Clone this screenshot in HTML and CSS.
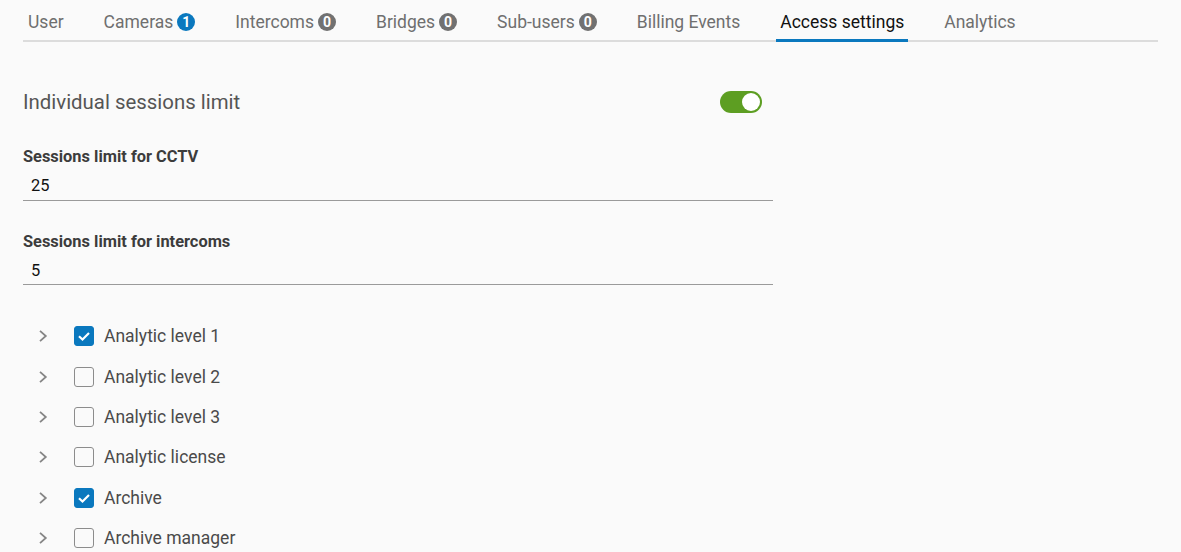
FILE: index.html
```html
<!DOCTYPE html>
<html>
<head>
<meta charset="utf-8">
<link rel="stylesheet" href="styles.css">
</head>
<body>
<div class="page">
  <nav class="tabs">
    <div class="tab">User</div>
    <div class="tab">Cameras <span class="badge badge-blue">1</span></div>
    <div class="tab">Intercoms <span class="badge">0</span></div>
    <div class="tab">Bridges <span class="badge">0</span></div>
    <div class="tab">Sub-users <span class="badge">0</span></div>
    <div class="tab">Billing Events</div>
    <div class="tab active">Access settings</div>
    <div class="tab">Analytics</div>
  </nav>

  <section class="settings">
    <div class="toggle-row">
      <h2 class="heading">Individual sessions limit</h2>
      <div class="switch"><div class="knob"></div></div>
    </div>

    <div class="field field-first">
      <div class="label">Sessions limit for CCTV</div>
      <div class="value">25</div>
    </div>
    <div class="field">
      <div class="label">Sessions limit for intercoms</div>
      <div class="value">5</div>
    </div>

    <ul class="tree">
      <li class="node">
        <svg class="chev" viewBox="0 0 12 14" width="12" height="14"><path d="M3 1.8 L8.8 7 L3 12.2" fill="none" stroke="#858585" stroke-width="1.8"/></svg>
        <span class="cb checked"><svg viewBox="0 0 20 20" width="20" height="20"><path d="M5 10.2 L8.5 13.5 L15 7" fill="none" stroke="#fff" stroke-width="2.2"/></svg></span>
        <span class="name">Analytic level 1</span>
      </li>
      <li class="node">
        <svg class="chev" viewBox="0 0 12 14" width="12" height="14"><path d="M3 1.8 L8.8 7 L3 12.2" fill="none" stroke="#858585" stroke-width="1.8"/></svg>
        <span class="cb"></span>
        <span class="name">Analytic level 2</span>
      </li>
      <li class="node">
        <svg class="chev" viewBox="0 0 12 14" width="12" height="14"><path d="M3 1.8 L8.8 7 L3 12.2" fill="none" stroke="#858585" stroke-width="1.8"/></svg>
        <span class="cb"></span>
        <span class="name">Analytic level 3</span>
      </li>
      <li class="node">
        <svg class="chev" viewBox="0 0 12 14" width="12" height="14"><path d="M3 1.8 L8.8 7 L3 12.2" fill="none" stroke="#858585" stroke-width="1.8"/></svg>
        <span class="cb"></span>
        <span class="name">Analytic license</span>
      </li>
      <li class="node">
        <svg class="chev" viewBox="0 0 12 14" width="12" height="14"><path d="M3 1.8 L8.8 7 L3 12.2" fill="none" stroke="#858585" stroke-width="1.8"/></svg>
        <span class="cb checked"><svg viewBox="0 0 20 20" width="20" height="20"><path d="M5 10.2 L8.5 13.5 L15 7" fill="none" stroke="#fff" stroke-width="2.2"/></svg></span>
        <span class="name">Archive</span>
      </li>
      <li class="node">
        <svg class="chev" viewBox="0 0 12 14" width="12" height="14"><path d="M3 1.8 L8.8 7 L3 12.2" fill="none" stroke="#858585" stroke-width="1.8"/></svg>
        <span class="cb"></span>
        <span class="name">Archive manager</span>
      </li>
    </ul>
  </section>
</div>
</body>
</html>
```

FILE: styles.css
```css
* { box-sizing: border-box; }
html, body {
  margin: 0;
  padding: 0;
  background: #fafafa;
  font-family: Roboto, "Liberation Sans", sans-serif;
  overflow: hidden;
}
.page {
  padding: 0 23px;
  width: 1181px;
  height: 552px;
}
.tabs {
  display: flex;
  gap: 32px;
  height: 42px;
  border-bottom: 2px solid #dcdcdc;
  width: 1135px;
  padding-left: 1px;
}
.tab {
  display: flex;
  align-items: center;
  gap: 4px;
  padding: 4px 4px 0;
  height: 42px;
  font-size: 17.5px;
  color: #6f6f6f;
  white-space: nowrap;
  margin-bottom: -2px;
  border-bottom: 3px solid transparent;
}
.tab.active {
  color: #111;
  border-bottom-color: #0a78be;
}
.badge {
  display: inline-flex;
  align-items: center;
  justify-content: center;
  width: 18px;
  height: 18px;
  border-radius: 50%;
  background: #717171;
  color: #fff;
  font-size: 14px;
  font-weight: 700;
}
.badge-blue { background: #0a78be; }

.settings {
  width: 750px;
}
.toggle-row {
  display: flex;
  align-items: center;
  justify-content: space-between;
  padding-right: 11px;
  margin-top: 48px;
  height: 24px;
}
.heading {
  margin: 0;
  font-size: 20.4px;
  font-weight: 400;
  color: #555;
}
.switch {
  width: 42px;
  height: 22px;
  border-radius: 11px;
  background: #5d9e22;
  display: flex;
  justify-content: flex-end;
  align-items: center;
  padding: 2px;
}
.knob {
  width: 18px;
  height: 18px;
  border-radius: 50%;
  background: #fff;
}
.field {
  border-bottom: 1px solid #9a9a9a;
}
.field-first { margin-top: 33px; }
.field + .field { margin-top: 31px; }
.label {
  font-size: 16.4px;
  font-weight: 700;
  color: #3c3c3c;
  line-height: 19px;
}
.value {
  font-size: 16.4px;
  color: #111;
  padding: 10px 8px 4px;
  line-height: 19px;
}
.field-first .value { padding-bottom: 5px; }
.tree {
  list-style: none;
  margin: 31px 0 0;
  padding: 0 0 0 14px;
}
.node {
  display: flex;
  align-items: center;
  height: 40.4px;
}
.chev {
  flex: none;
}
.cb {
  flex: none;
  width: 20px;
  height: 20px;
  margin-left: 25px;
  border: 1.5px solid #8c8c8c;
  border-radius: 3px;
  display: flex;
  align-items: center;
  justify-content: center;
}
.cb.checked {
  background: #0a78be;
  border-color: #0a78be;
}
.cb svg { flex: none; }
.name {
  margin-left: 10px;
  font-size: 17.5px;
  color: #4a4a4a;
}
```
